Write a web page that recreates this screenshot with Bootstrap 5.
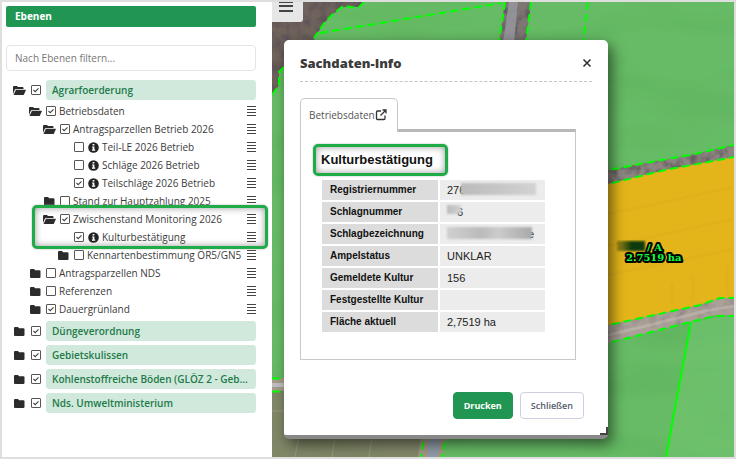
<!DOCTYPE html>
<html lang="de">
<head>
<meta charset="utf-8">
<meta name="viewport" content="width=device-width, initial-scale=1">
<title>Ebenen – Sachdaten-Info</title>
<link href="https://cdn.jsdelivr.net/npm/bootstrap@5.3.0/dist/css/bootstrap.min.css" rel="stylesheet">
<style>
:root{--brand:#219653;--chip:#d1e9dc;--chip-ink:#227a49;--ink:#3b3b3b;--mark:#1fab48}
body{font-family:"Open Sans","Noto Sans",sans-serif;font-size:10px;line-height:18px;color:var(--ink)}
.app-frame{border:2px solid #dedede;min-height:100vh}
.layer-panel{width:270px;padding:4px 16px 4px 4px}
.panel-title{background:var(--brand);font-size:10px;line-height:17px;padding:2px 9px;border-radius:2px}
.layer-filter{font-size:10px;line-height:17px;padding:3px 8px;height:26px;border-color:#e2e4ea;border-radius:4px;margin:18px 0 9px}
.layer-filter::placeholder{color:#777}
.tree-row{height:18px;gap:3px}
.tree-row label{flex:1 1 0;min-width:0;white-space:nowrap}
.lvl-1{padding-left:23px}.lvl-2{padding-left:37px}.lvl-3{padding-left:67px}.lvl-2b{padding-left:51px}
.theme-row{gap:5px;margin-bottom:4px;padding-left:7px}
.theme-row.is-open{margin-bottom:2px}
.theme-row label{flex:1 1 0;min-width:0;background:var(--chip);color:var(--chip-ink);font-weight:600;line-height:20px;padding:0 6px;border-radius:3px}
.tree-end{margin-bottom:3px}
.folder{width:13px;height:11px;flex:none;fill:#2c2c2c}
.tick{appearance:none;width:10px;height:10px;flex:none;margin:0 0 0 1px;border:1px solid #555;border-radius:1px;background:#fff}
.tick:checked{background:#fff url("data:image/svg+xml,%3Csvg xmlns='http://www.w3.org/2000/svg' viewBox='0 0 8 8'%3E%3Cpath d='M1.5 4l1.7 1.7L6.5 2.3' fill='none' stroke='%23444' stroke-width='1.1'/%3E%3C/svg%3E")}
.theme-row .tick{margin-left:0}
.info-icon{width:11px;height:11px;flex:none;margin-left:1px}
.row-menu{width:9px;height:10px;border:0;padding:0;background:repeating-linear-gradient(#444 0 1px,transparent 1px 3px);flex:none}
.marked-group{position:relative;isolation:isolate}
.marked-group::before{content:"";position:absolute;z-index:-1;inset:-5px -12px -3px 26px;background:#fff;border:3px solid var(--mark);border-radius:5px;box-shadow:inset 0 0 7px #999,0 0 2px #aaa}
.map-pane{position:relative;overflow:hidden;background:#66bb66}
.map-canvas{position:absolute;inset:0}
.map-menu{position:relative;width:31px;height:20px;background:#e6e6e6;border:0;border-radius:0 0 3px 0;padding:0 7px}
.info-window{position:absolute;left:12px;top:38px;width:324px;background:#fff;border-radius:5px;border-bottom:4px solid #888;box-shadow:4px 5px 14px rgba(0,0,0,.55);padding:13px 16px 16px}
.info-window h1{font-size:13px;line-height:20px;font-weight:800;margin:0}
.info-head{border-bottom:1px dashed #c4c4c4;padding-bottom:8px}
.close-x{border:0;background:none;padding:0;width:10px;height:20px;line-height:0}
.tab-bar{margin-top:16px;border:0}
.tab-bar .nav-link{position:relative;z-index:1;margin-bottom:-3px;height:34px;font-size:10px;line-height:18px;padding:4px 10px 6px 8px;color:#555;background:#fff;border:1px solid #c8c8c8;border-bottom:0;border-radius:5px 5px 0 0}
.tab-body{border:1px solid #c8c8c8;border-top:3px solid #b8b8b8;margin-right:16px;padding:12px 12px 25px;font-family:"Liberation Sans",Arial,sans-serif}
.section-mark{display:inline-block;border:3px solid var(--mark);border-radius:5px;box-shadow:inset 0 0 7px #999,0 0 2px #aaa;color:#111;font-size:13px;line-height:20px;font-weight:700;padding:3px 12px 3px 5px;margin:0;vertical-align:top}
.facts{border-collapse:separate;border-spacing:2px;margin:2px 0 0 7px;width:227px;color:#222;font-size:11px;line-height:14px}
.facts th{background:#dcdcdc;width:116px;color:#111;font-size:10px}
.facts th,.facts td{padding:3px 0 3px 8px;height:20px;white-space:nowrap}
.facts td{background:#ececec;padding-left:7px}
.redacted{display:inline-block;position:relative;height:12px;vertical-align:top;background:linear-gradient(90deg,#bbb,#d2d2d2);filter:blur(1px)}
.red-a{width:75px;margin-left:-4px}.red-b{width:14px;height:9px;margin-right:-4px}
.red-c{width:85px;margin-right:-4px;background:linear-gradient(90deg,#d0d0d0,#bbb 40%,#ccc 60%,#aaa)}
.info-actions{gap:7px;margin-top:32px;padding-right:8px}
.info-actions .btn{font-size:9px;line-height:17px;font-weight:600;padding:4px 10px;border-radius:4px}
.info-actions .btn-print{background:var(--brand);border-color:var(--brand);color:#fff;font-weight:700}
.info-actions .btn-shut{border-color:#cfcfe2;color:#555c6b;background:#fff}
.resize-grip{position:absolute;right:0;bottom:0;width:8px;height:8px;border:solid #444;border-width:0 2px 2px 0}
</style>
</head>
<body>
<svg class="d-none" aria-hidden="true">
  <symbol id="fo" viewBox="0 0 13 11"><path d="M0 9V2q0-1 1-1h3l1 1h4.500q1 0 1 1v1H3Q2.200 4 1.800 4.800z"/><path d="M3 4.700H12.500q.5 0 .3.500L11 9.400q-.3.600-1 .600H.5z"/></symbol>
  <symbol id="fc" viewBox="0 0 13 11"><path d="M1 2q0-1 1-1h3l1.200 1.200H10.500q1 0 1 1V9q0 1-1 1H2q-1 0-1-1z"/></symbol>
  <symbol id="in" viewBox="0 0 11 11"><circle cx="5.500" cy="5.500" r="5.300" fill="#222"/><path d="M4.600 2h1.800v1.500H4.600zM4 4.500h2.400v3h.8v1.200H3.900V7.500h.8V5.600H4z" fill="#fff"/></symbol>
</svg>
<div class="app-frame d-flex">
  <aside class="layer-panel flex-shrink-0 bg-white">
    <h2 class="panel-title text-white fw-bold mb-0">Ebenen</h2>
    <input class="form-control layer-filter" type="text" placeholder="Nach Ebenen filtern..." aria-label="Nach Ebenen filtern">
    <div class="theme-row is-open d-flex align-items-center"><svg class="folder"><use href="#fo"/></svg><input class="tick" type="checkbox" id="t1" checked><label for="t1">Agrarfoerderung</label></div>
    <div class="tree-row lvl-1 d-flex align-items-center"><svg class="folder"><use href="#fo"/></svg><input class="tick" type="checkbox" id="l1" checked><label for="l1">Betriebsdaten</label><button class="row-menu" aria-label="Menü"></button></div>
    <div class="tree-row lvl-2 d-flex align-items-center"><svg class="folder"><use href="#fo"/></svg><input class="tick" type="checkbox" id="l2" checked><label for="l2">Antragsparzellen Betrieb 2026</label><button class="row-menu" aria-label="Menü"></button></div>
    <div class="tree-row lvl-3 d-flex align-items-center"><input class="tick" type="checkbox" id="l3"><svg class="info-icon"><use href="#in"/></svg><label for="l3">Teil-LE 2026 Betrieb</label><button class="row-menu" aria-label="Menü"></button></div>
    <div class="tree-row lvl-3 d-flex align-items-center"><input class="tick" type="checkbox" id="l4"><svg class="info-icon"><use href="#in"/></svg><label for="l4">Schläge 2026 Betrieb</label><button class="row-menu" aria-label="Menü"></button></div>
    <div class="tree-row lvl-3 d-flex align-items-center"><input class="tick" type="checkbox" id="l5" checked><svg class="info-icon"><use href="#in"/></svg><label for="l5">Teilschläge 2026 Betrieb</label><button class="row-menu" aria-label="Menü"></button></div>
    <div class="tree-row lvl-2 d-flex align-items-center"><svg class="folder"><use href="#fc"/></svg><input class="tick" type="checkbox" id="l6"><label for="l6">Stand zur Hauptzahlung 2025</label><button class="row-menu" aria-label="Menü"></button></div>
    <div class="marked-group">
      <div class="tree-row lvl-2 d-flex align-items-center"><svg class="folder"><use href="#fo"/></svg><input class="tick" type="checkbox" id="l7" checked><label for="l7">Zwischenstand Monitoring 2026</label><button class="row-menu" aria-label="Menü"></button></div>
      <div class="tree-row lvl-3 d-flex align-items-center"><input class="tick" type="checkbox" id="l8" checked><svg class="info-icon"><use href="#in"/></svg><label for="l8">Kulturbestätigung</label><button class="row-menu" aria-label="Menü"></button></div>
    </div>
    <div class="tree-row lvl-2b d-flex align-items-center"><svg class="folder"><use href="#fc"/></svg><input class="tick" type="checkbox" id="l9"><label for="l9">Kennartenbestimmung ÖR5/GN5</label><button class="row-menu" aria-label="Menü"></button></div>
    <div class="tree-row lvl-1 d-flex align-items-center"><svg class="folder"><use href="#fc"/></svg><input class="tick" type="checkbox" id="l10"><label for="l10">Antragsparzellen NDS</label><button class="row-menu" aria-label="Menü"></button></div>
    <div class="tree-row lvl-1 d-flex align-items-center"><svg class="folder"><use href="#fc"/></svg><input class="tick" type="checkbox" id="l11"><label for="l11">Referenzen</label><button class="row-menu" aria-label="Menü"></button></div>
    <div class="tree-row tree-end lvl-1 d-flex align-items-center"><svg class="folder"><use href="#fc"/></svg><input class="tick" type="checkbox" id="l12" checked><label for="l12">Dauergrünland</label><button class="row-menu" aria-label="Menü"></button></div>
    <div class="theme-row d-flex align-items-center"><svg class="folder"><use href="#fc"/></svg><input class="tick" type="checkbox" id="t2" checked><label for="t2">Düngeverordnung</label></div>
    <div class="theme-row d-flex align-items-center"><svg class="folder"><use href="#fc"/></svg><input class="tick" type="checkbox" id="t3" checked><label for="t3">Gebietskulissen</label></div>
    <div class="theme-row d-flex align-items-center"><svg class="folder"><use href="#fc"/></svg><input class="tick" type="checkbox" id="t4" checked><label for="t4" class="text-nowrap">Kohlenstoffreiche Böden (GLÖZ 2 - Geb...</label></div>
    <div class="theme-row d-flex align-items-center"><svg class="folder"><use href="#fc"/></svg><input class="tick" type="checkbox" id="t5" checked><label for="t5">Nds. Umweltministerium</label></div>
  </aside>
  <main class="map-pane flex-grow-1">
    <svg class="map-canvas w-100 h-100" viewBox="272 2 462 455" preserveAspectRatio="xMinYMin slice" role="img" aria-label="Luftbildkarte">
      <defs>
        <filter id="rough" x="0" y="0" width="1" height="1"><feTurbulence type="fractalNoise" baseFrequency=".11" numOctaves="4" seed="4"/><feColorMatrix values="0 0 0 0 .1  0 0 0 0 .08  0 0 0 0 .1  2 0 0 0 -.75"/><feComposite in2="SourceGraphic" operator="in" result="n"/><feMerge><feMergeNode in="SourceGraphic"/><feMergeNode in="n"/></feMerge></filter>
        <filter id="gravel" x="0" y="0" width="1" height="1"><feTurbulence type="fractalNoise" baseFrequency=".08" numOctaves="4" seed="9"/><feColorMatrix values="0 0 0 0 .25  0 0 0 0 .2  0 0 0 0 .22  2 0 0 0 -.9"/><feComposite in2="SourceGraphic" operator="in" result="n"/><feMerge><feMergeNode in="SourceGraphic"/><feMergeNode in="n"/></feMerge></filter>
        <filter id="soft" x="0" y="0" width="1" height="1"><feTurbulence type="fractalNoise" baseFrequency=".008 .03" numOctaves="2" seed="8"/><feColorMatrix values="0 0 0 0 0  0 0 0 0 .2  0 0 0 0 0  .3 0 0 0 -.12"/><feComposite in2="SourceGraphic" operator="in" result="n"/><feMerge><feMergeNode in="SourceGraphic"/><feMergeNode in="n"/></feMerge></filter>
        <filter id="blurry"><feGaussianBlur stdDeviation="1"/></filter>
        <linearGradient id="hid"><stop stop-color="#6b6a12" stop-opacity=".6"/><stop offset=".5" stop-color="#123c0c"/><stop offset="1" stop-color="#083a06"/></linearGradient>
      </defs>
      <path fill="#68bb66" filter="url(#soft)" d="M272 2H734V457H272z"/>
      <path fill="#71c26e" opacity=".7" d="M691 322L734 315V457H666z"/>
      <path fill="#6f645c" filter="url(#rough)" d="M272 2H364L358 7H343L333 14L325 22L314 38L320 60H284V67L279 72V85L272 95z"/>
      <path fill="#7d7672" filter="url(#rough)" d="M505 2H531L526 42H499z"/>
      <path fill="#999ba2" opacity=".8" d="M509 2H518L514 42H503z"/>
      <path fill="#83886a" filter="url(#soft)" d="M272 391H430L421 457H272z"/>
      <path stroke="#a4a386" opacity=".6" fill="none" d="M272 411H300M300 430l-5 27M336 430l-4 27M373 430l-4 27"/>
      <path fill="#a59c8a" d="M272 378H300V391H272z"/><path fill="#c0bfc0" d="M272 383H300V387H272z"/>
      <path fill="#a49784" d="M422 430H448L442 457H418z"/><path fill="#8e9aa6" d="M430 430H441L438 457H427z"/>
      <path fill="#8d8580" filter="url(#rough)" d="M600 172L645 163L690 155L734 145V157L665 170L600 186z"/>
      <path fill="#e4b51a" d="M600 186L665 170L734 157V298H720L700 305L650 316L600 327z"/>
      <path stroke="#c6991b" opacity=".15" stroke-width="3" fill="none" d="M608 214L734 187M608 246L734 219M608 275L734 249M672 304v-20M693 300v-24M727 295v-30"/>
      <path fill="#aaa098" filter="url(#gravel)" d="M600 327L650 316L700 305L720 298H734V315H715L690 322L640 335L600 345z"/>
      <path stroke="#c5beb6" stroke-width="3" opacity=".5" fill="none" d="M600 337L650 325L705 311L734 306"/>
      <g fill="none" stroke="#0f0" stroke-width="2" stroke-dasharray="8 4">
        <path d="M364 2L358 8L343 6L333 14L325 22L314 38M320 33L502 3M284 67L279 72V85L272 95"/>
        <path d="M505 2L499 42M531 2L526 42M588 2L583 42M272 378.500H300M272 391.500H300M425 430L421 457M447 430L442 457"/>
        <path d="M600 172L645 163L690 155L734 145M600 186L665 170L734 157M600 327L650 316L700 305L720 298H734M600 345L640 335L690 322L715 316H734"/>
      </g>
      <path stroke="#0f0" stroke-width="2" d="M691 322L666 457"/>
      <g font-family="DejaVu Serif,serif" font-weight="700" font-size="10" fill="#1f4" stroke="#000" stroke-width="4" stroke-linejoin="round" paint-order="stroke"><text x="647" y="251">/ A</text><text x="626" y="261">2.7519 ha</text></g>
      <path fill="url(#hid)" filter="url(#blurry)" d="M617 241H645V251H617z"/>
    </svg>
    <button class="map-menu d-flex align-items-start" aria-label="Kartenmenü"><svg width="14" height="12" stroke="#444" stroke-width="2"><path d="M0 0H14M0 4H14M0 9H14"/></svg></button>
    <section class="info-window" role="dialog" aria-labelledby="dlg">
      <div class="info-head d-flex justify-content-between"><h1 id="dlg">Sachdaten-Info</h1><button class="close-x" aria-label="Schließen"><svg width="10" height="10" viewBox="0 0 10 10" stroke="#333" stroke-width="1.600"><path d="M1.500 1.500l7 7m0-7l-7 7"/></svg></button></div>
      <ul class="nav nav-tabs tab-bar"><li class="nav-item"><a class="nav-link d-flex align-items-center" href="#daten">Betriebsdaten<svg class="ms-0" width="12" height="12" viewBox="0 0 12 12" fill="none" stroke="#333" stroke-width="1.300"><path d="M6 2H2.500Q1.500 2 1.500 3V9.500q0 1 1 1H9q1 0 1-1V6.500M7.500 1h3.500v3.500M11 1L5.500 6.500"/></svg></a></li></ul>
      <div class="tab-body" id="daten">
        <h2 class="section-mark">Kulturbestätigung</h2>
        <table class="facts">
          <tr><th scope="row">Registriernummer</th><td>276<span class="redacted red-a"></span></td></tr>
          <tr><th scope="row">Schlagnummer</th><td><span class="redacted red-b"></span>6</td></tr>
          <tr><th scope="row">Schlagbezeichnung</th><td><span class="redacted red-c"></span>e</td></tr>
          <tr><th scope="row">Ampelstatus</th><td>UNKLAR</td></tr>
          <tr><th scope="row">Gemeldete Kultur</th><td>156</td></tr>
          <tr><th scope="row">Festgestellte Kultur</th><td></td></tr>
          <tr><th scope="row">Fläche aktuell</th><td>2,7519 ha</td></tr>
        </table>
      </div>
      <div class="info-actions d-flex justify-content-end"><button class="btn btn-print">Drucken</button><button class="btn btn-shut">Schließen</button></div>
      <span class="resize-grip"></span>
    </section>
  </main>
</div>
<script src="https://cdn.jsdelivr.net/npm/bootstrap@5.3.0/dist/js/bootstrap.bundle.min.js"></script>
</body>
</html>
